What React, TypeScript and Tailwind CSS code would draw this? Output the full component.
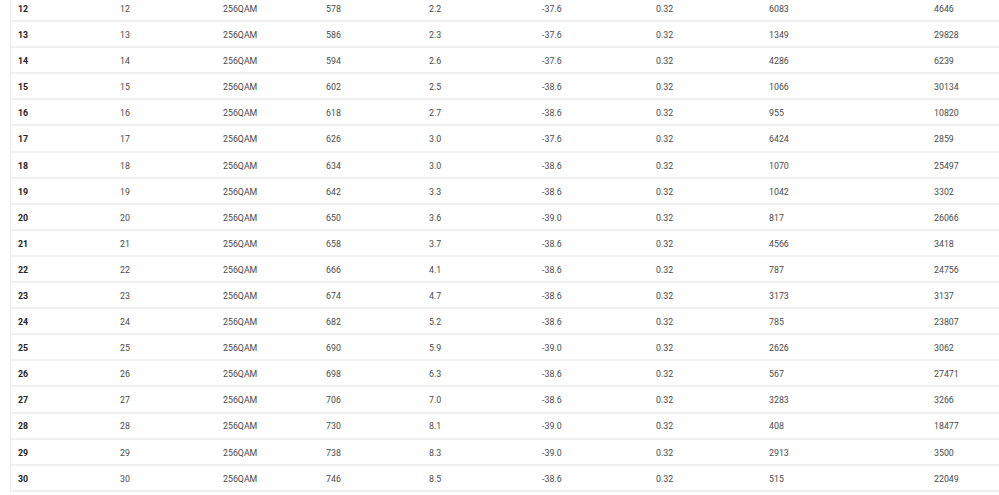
import React from "react";

const rows: string[][] = [
  ["12", "12", "256QAM", "578", "2.2", "-37.6", "0.32", "6083", "4646"],
  ["13", "13", "256QAM", "586", "2.3", "-37.6", "0.32", "1349", "29828"],
  ["14", "14", "256QAM", "594", "2.6", "-37.6", "0.32", "4286", "6239"],
  ["15", "15", "256QAM", "602", "2.5", "-38.6", "0.32", "1066", "30134"],
  ["16", "16", "256QAM", "618", "2.7", "-38.6", "0.32", "955", "10820"],
  ["17", "17", "256QAM", "626", "3.0", "-37.6", "0.32", "6424", "2859"],
  ["18", "18", "256QAM", "634", "3.0", "-38.6", "0.32", "1070", "25497"],
  ["19", "19", "256QAM", "642", "3.3", "-38.6", "0.32", "1042", "3302"],
  ["20", "20", "256QAM", "650", "3.6", "-39.0", "0.32", "817", "26066"],
  ["21", "21", "256QAM", "658", "3.7", "-38.6", "0.32", "4566", "3418"],
  ["22", "22", "256QAM", "666", "4.1", "-38.6", "0.32", "787", "24756"],
  ["23", "23", "256QAM", "674", "4.7", "-38.6", "0.32", "3173", "3137"],
  ["24", "24", "256QAM", "682", "5.2", "-38.6", "0.32", "785", "23807"],
  ["25", "25", "256QAM", "690", "5.9", "-39.0", "0.32", "2626", "3062"],
  ["26", "26", "256QAM", "698", "6.3", "-38.6", "0.32", "567", "27471"],
  ["27", "27", "256QAM", "706", "7.0", "-38.6", "0.32", "3283", "3266"],
  ["28", "28", "256QAM", "730", "8.1", "-39.0", "0.32", "408", "18477"],
  ["29", "29", "256QAM", "738", "8.3", "-39.0", "0.32", "2913", "3500"],
  ["30", "30", "256QAM", "746", "8.5", "-38.6", "0.32", "515", "22049"],
];

const widths = [
  "w-[102px]",
  "w-[103px]",
  "w-[103px]",
  "w-[103px]",
  "w-[113px]",
  "w-[114px]",
  "w-[113px]",
  "w-[165px]",
  "flex-1",
];

export default function App() {
  return (
    <div
      className="w-[999px] h-[495px] overflow-hidden bg-white"
      style={{ fontFamily: "Roboto, 'Noto Sans', sans-serif" }}
    >
      <div className="ml-[10px] -mt-[4px] border-l border-[#ececec]">
        {rows.map((r, i) => (
          <div
            key={i}
            className="flex h-[26.1px] items-center border-b-2 border-[#f0f0f0] text-[8.8px] text-[#4a4a4a]"
          >
            {r.map((c, j) => (
              <div
                key={j}
                className={`${widths[j]} shrink-0 pl-[7px] pt-[3px] ${
                  j === 0 ? "font-bold text-[#222]" : ""
                }`}
              >
                {c}
              </div>
            ))}
          </div>
        ))}
      </div>
    </div>
  );
}
